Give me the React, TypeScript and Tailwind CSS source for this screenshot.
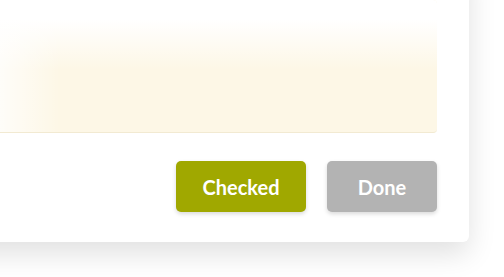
export default function App() {
  return (
    <div className="w-[504px] h-[277px] overflow-hidden bg-white font-['Lato','Liberation_Sans',sans-serif]">
      <div className="-mt-[40px] -ml-[40px] w-[509px] rounded-md bg-white pt-[40px] pr-[32px] pb-[30px] shadow-[0_12px_28px_rgba(0,0,0,0.12)]">
        <div className="h-[133px] rounded-[4px] border-b border-[#f2ead2] bg-[#fdf7e6] bg-[linear-gradient(to_right,#ffffff_20px,rgba(255,255,255,0)_100px),linear-gradient(to_bottom,#ffffff_20px,rgba(255,255,255,0)_70px)]" />
        <div className="mt-[28px] flex justify-end gap-[21px]">
          <button className="h-[51px] w-[130px] rounded-[5px] bg-[#a0a800] text-[20px] font-bold text-white shadow-[0_2px_4px_rgba(0,0,0,0.15)]">
            Checked
          </button>
          <button className="h-[51px] w-[110px] rounded-[5px] bg-[#b3b3b3] text-[20px] font-bold text-white shadow-[0_2px_4px_rgba(0,0,0,0.15)]">
            Done
          </button>
        </div>
      </div>
    </div>
  );
}
